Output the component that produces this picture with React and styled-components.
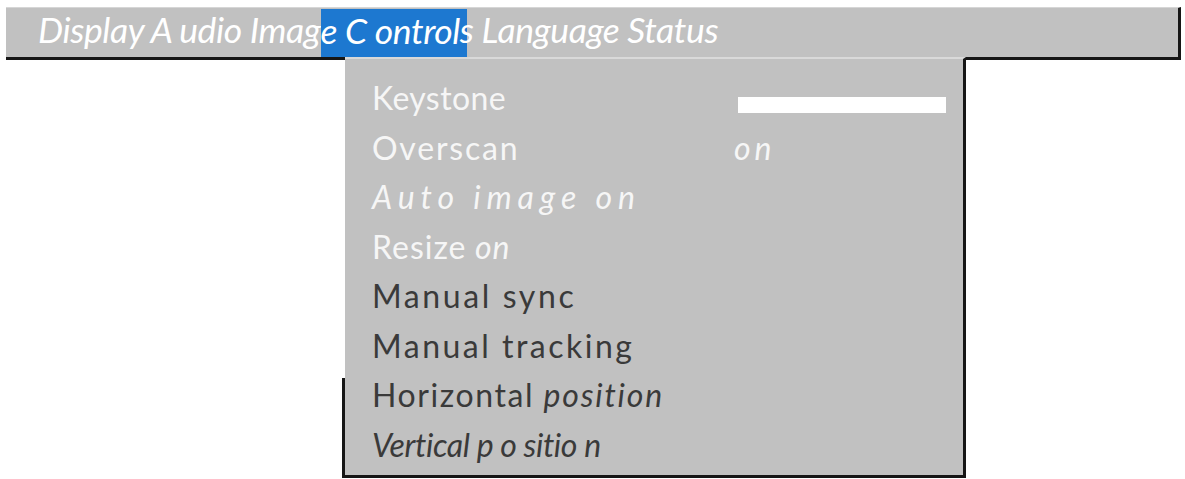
import React from 'react';
import styled, { createGlobalStyle } from 'styled-components';

const GlobalStyle = createGlobalStyle`
  html, body {
    margin: 0;
    padding: 0;
    background: #ffffff;
  }
  body {
    font-family: Lato, "Open Sans", "Liberation Sans", sans-serif;
  }
`;

const Page = styled.div`
  width: 1185px;
  height: 479px;
  padding: 7px 4px 0 6px;
  box-sizing: border-box;
  overflow: hidden;
`;

const MenuBar = styled.div`
  display: flex;
  align-items: stretch;
  height: 53px;
  background: #c1c1c1;
  border-top: 1px solid #d6d6d6;
  border-right: 3px solid #161616;
  border-bottom: 3px solid #161616;
  padding-left: 32px;
  box-sizing: border-box;
  position: relative;
  z-index: 0;
`;

const MenuText = styled.span`
  display: flex;
  align-items: center;
  white-space: pre;
  font-style: italic;
  font-size: 35.5px;
  color: #ffffff;
  letter-spacing: -0.4px;
  padding-bottom: 6px;
  background: ${(p) => (p.$active ? '#1d78d0' : 'transparent')};
  padding-right: ${(p) => (p.$active ? '7px' : '0')};
  margin-right: ${(p) => (p.$active ? '-7px' : '0')};
  margin-top: ${(p) => (p.$active ? '1px' : '0')};
`;

const Panel = styled.div`
  position: relative;
  z-index: 1;
  margin: -3px 0 0 339px;
  width: 621px;
  height: 421px;
  background: #c1c1c1;
  border-top: 2px solid #d9d9d9;
  border-right: 3px solid #161616;
  border-bottom: 3px solid #161616;
  box-sizing: border-box;
  padding: 14px 0 0 27px;
  display: flex;
  flex-direction: column;

  &::before {
    content: '';
    position: absolute;
    left: -3px;
    bottom: -3px;
    width: 3px;
    height: 100px;
    background: #161616;
  }
`;

const Row = styled.div`
  display: grid;
  grid-template-columns: 363px 1fr;
  align-items: center;
  height: 49.5px;
`;

const Label = styled.div`
  font-size: 32px;
  white-space: pre;
  color: ${(p) => (p.$tone === 'light' ? '#f6f6f6' : '#3a3a3a')};
`;

const Part = styled.span`
  font-style: ${(p) => (p.$italic ? 'italic' : 'normal')};
  letter-spacing: ${(p) => p.$spacing || '0px'};
`;

const Slider = styled.div`
  align-self: start;
  width: 208px;
  height: 16px;
  margin: 24px 0 0 3px;
  background: #ffffff;
`;

const Value = styled.span`
  font-size: 32px;
  font-style: italic;
  letter-spacing: 4px;
  color: #f6f6f6;
  margin-left: -1px;
`;

const rows = [
  { tone: 'light', parts: [{ text: 'Keystone', spacing: '0.4px' }], value: 'slider' },
  { tone: 'light', parts: [{ text: 'Overscan', spacing: '1.8px' }], value: 'on' },
  { tone: 'light', parts: [{ text: 'Auto image on', italic: true, spacing: '5.9px' }] },
  { tone: 'light', parts: [{ text: 'Resize', spacing: '1px' }, { text: ' on', italic: true, spacing: '1px' }] },
  { tone: 'dark', parts: [{ text: 'Manual sync', spacing: '2.6px' }] },
  { tone: 'dark', parts: [{ text: 'Manual tracking', spacing: '2.5px' }] },
  { tone: 'dark', parts: [{ text: 'Horizontal', spacing: '1.6px' }, { text: ' position', italic: true, spacing: '1.8px' }] },
  { tone: 'dark', parts: [{ text: 'Vertical p o sitio n', italic: true, spacing: '-0.4px' }] },
];

export default function App() {
  return (
    <>
      <GlobalStyle />
      <Page>
        <MenuBar>
          <MenuText>Display A udio Imag</MenuText>
          <MenuText $active>e C ontrol</MenuText>
          <MenuText>s Language Status</MenuText>
        </MenuBar>
        <Panel>
          {rows.map((row, i) => (
            <Row key={i}>
              <Label $tone={row.tone}>
                {row.parts.map((p, j) => (
                  <Part key={j} $italic={p.italic} $spacing={p.spacing}>
                    {p.text}
                  </Part>
                ))}
              </Label>
              {row.value === 'slider' && <Slider />}
              {row.value === 'on' && <Value>on</Value>}
            </Row>
          ))}
        </Panel>
      </Page>
    </>
  );
}
